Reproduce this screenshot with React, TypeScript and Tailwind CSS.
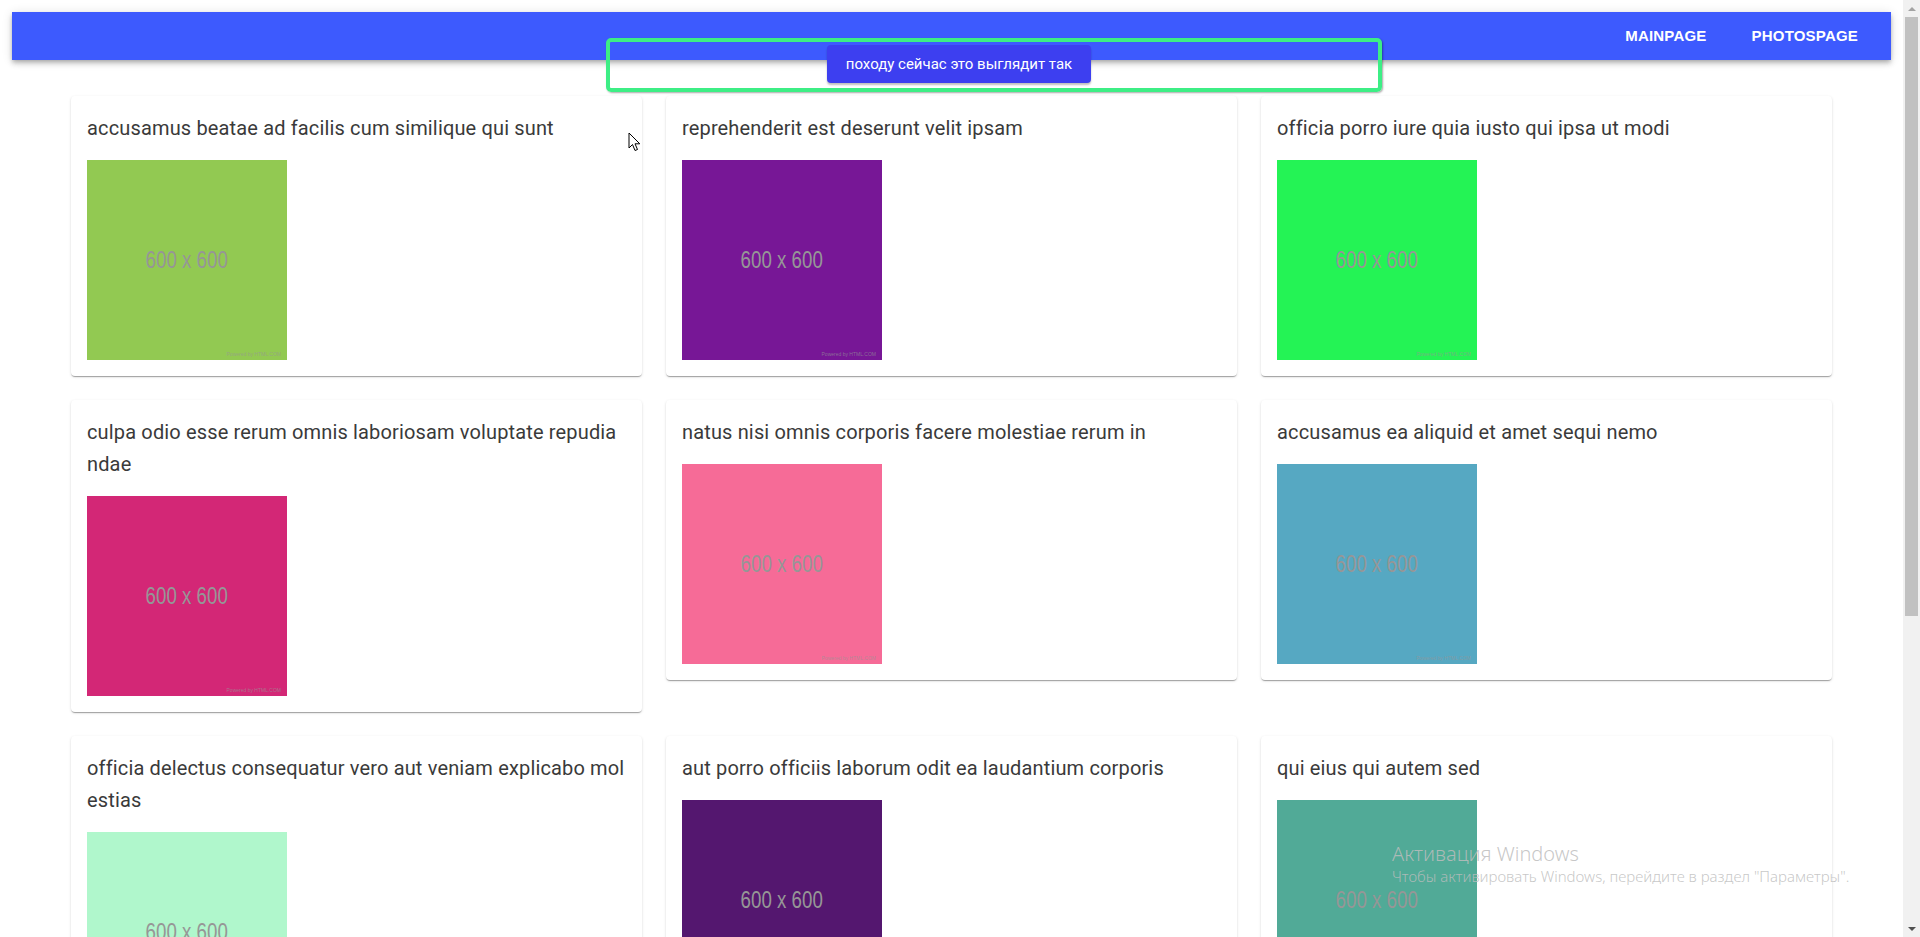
import React from "react";

const photos = [
  { id: 1, title: "accusamus beatae ad facilis cum similique qui sunt", bg: "bg-[#92c952]" },
  { id: 2, title: "reprehenderit est deserunt velit ipsam", bg: "bg-[#771796]" },
  { id: 3, title: "officia porro iure quia iusto qui ipsa ut modi", bg: "bg-[#24f355]" },
  { id: 4, title: "culpa odio esse rerum omnis laboriosam voluptate repudiandae", bg: "bg-[#d32776]" },
  { id: 5, title: "natus nisi omnis corporis facere molestiae rerum in", bg: "bg-[#f66b97]" },
  { id: 6, title: "accusamus ea aliquid et amet sequi nemo", bg: "bg-[#56a8c2]" },
  { id: 7, title: "officia delectus consequatur vero aut veniam explicabo molestias", bg: "bg-[#b0f7cc]" },
  { id: 8, title: "aut porro officiis laborum odit ea laudantium corporis", bg: "bg-[#54176f]" },
  { id: 9, title: "qui eius qui autem sed", bg: "bg-[#51aa97]" },
];

function Placeholder({ bg }: { bg: string }) {
  return (
    <div className={`relative mt-4 flex h-[200px] w-[200px] items-center justify-center ${bg}`}>
      <span className="scale-x-[0.78] font-['Liberation_Sans',Arial,sans-serif] text-[24px] leading-none text-[#969696]">
        600 x 600
      </span>
      <span className="absolute bottom-[3px] right-[6px] font-['Liberation_Sans',Arial,sans-serif] text-[5px] leading-none text-[#969696]/70">
        Powered by HTML.COM
      </span>
    </div>
  );
}

function PhotoCard({ title, bg }: { title: string; bg: string }) {
  return (
    <div className="rounded bg-white p-4 shadow-[0_2px_1px_-1px_rgba(0,0,0,0.2),0_1px_1px_0_rgba(0,0,0,0.14),0_1px_3px_0_rgba(0,0,0,0.12)]">
      <h6 className="break-all text-[20px] leading-8 tracking-[0.15px] text-[#3a3a3a]">{title}</h6>
      <Placeholder bg={bg} />
    </div>
  );
}

function Scrollbar() {
  return (
    <div className="flex h-full w-[17px] shrink-0 flex-col items-center bg-[#f1f1f1]">
      <div className="flex h-[17px] items-center justify-center">
        <div className="h-0 w-0 border-x-[4px] border-b-[4px] border-x-transparent border-b-[#a3a3a3]" />
      </div>
      <div className="h-[599px] w-[13px] bg-[#c1c1c1]" />
      <div className="flex-1" />
      <div className="flex h-[17px] items-center justify-center">
        <div className="h-0 w-0 border-x-[4px] border-t-[4px] border-x-transparent border-t-[#505050]" />
      </div>
    </div>
  );
}

export default function App() {
  return (
    <div className="flex h-[937px] overflow-hidden bg-white font-['Roboto','Liberation_Sans',Arial,sans-serif]">
      <div className="relative min-w-0 flex-1 overflow-hidden">
        <header className="mx-3 mt-3 flex h-12 items-center justify-end gap-[45px] bg-[#3d5afe] pr-[33px] shadow-[0_2px_4px_-1px_rgba(0,0,0,0.2),0_4px_5px_0_rgba(0,0,0,0.14),0_1px_10px_0_rgba(0,0,0,0.12)]">
          <a className="font-['Liberation_Sans',Arial,sans-serif] text-[15px] font-bold uppercase tracking-[0.2px] text-white">Mainpage</a>
          <a className="font-['Liberation_Sans',Arial,sans-serif] text-[15px] font-bold uppercase tracking-[0.2px] text-white">Photospage</a>
        </header>

        <main className="mt-9 grid grid-cols-3 items-start gap-6 px-[71px]">
          {photos.map((p) => (
            <PhotoCard key={p.id} title={p.title} bg={p.bg} />
          ))}
        </main>

        {/* highlight annotation */}
        <div className="absolute left-[606px] top-[38px] h-[54px] w-[776px] rounded-[5px] border-4 border-[#3dee85] shadow-[1px_1px_2px_rgba(0,0,0,0.35)]" />
        <button className="absolute left-[827px] top-[45px] flex h-[38px] w-[264px] items-center justify-center rounded bg-[#3d3ff0] text-[15px] text-white shadow-[0_2px_2px_rgba(0,0,0,0.25)]">
          походу сейчас это выглядит так
        </button>

        {/* cursor */}
        <svg className="absolute left-[628px] top-[132px]" width="13" height="20" viewBox="0 0 13 20">
          <path d="M1 1 L1 16 L4.5 12.5 L7 18.5 L9.5 17.5 L7 11.8 L11.8 11.8 Z" fill="#fff" stroke="#000" strokeWidth="1" strokeLinejoin="round" />
        </svg>

        {/* windows watermark */}
        <div className="pointer-events-none absolute left-[1392px] top-[842px] font-['Noto_Sans','Open_Sans',sans-serif] font-light text-[#bdbdbd]/85">
          <div className="text-[20px] leading-6">Активация Windows</div>
          <div className="text-[15px] leading-5">Чтобы активировать Windows, перейдите в раздел "Параметры".</div>
        </div>
      </div>
      <Scrollbar />
    </div>
  );
}
